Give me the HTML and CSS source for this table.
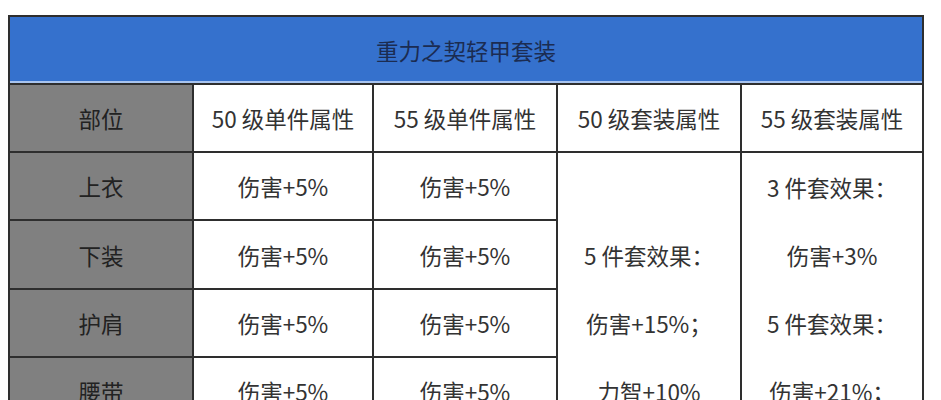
FILE: index.html
```html
<!DOCTYPE html>
<html lang="zh-CN">
<head>
<meta charset="utf-8">
<title>重力之契轻甲套装</title>
<link rel="stylesheet" href="styles.css">
</head>
<body>
<div class="page">
  <table class="set-table">
    <colgroup>
      <col class="c1"><col class="c2"><col class="c3"><col class="c4"><col class="c5">
    </colgroup>
    <tr class="title-row">
      <td colspan="5" class="title">重力之契轻甲套装</td>
    </tr>
    <tr class="row">
      <td class="part">部位</td>
      <td>50 级单件属性</td>
      <td>55 级单件属性</td>
      <td>50 级套装属性</td>
      <td>55 级套装属性</td>
    </tr>
    <tr class="row">
      <td class="part">上衣</td>
      <td>伤害+5%</td>
      <td>伤害+5%</td>
      <td rowspan="5" class="multi">
        <div class="line">5 件套效果：</div>
        <div class="line">伤害+15%；</div>
        <div class="line">力智+10%</div>
      </td>
      <td rowspan="5" class="multi">
        <div class="line">3 件套效果：</div>
        <div class="line">伤害+3%</div>
        <div class="line">5 件套效果：</div>
        <div class="line">伤害+21%；</div>
        <div class="line">力智+15%</div>
      </td>
    </tr>
    <tr class="row">
      <td class="part">下装</td>
      <td>伤害+5%</td>
      <td>伤害+5%</td>
    </tr>
    <tr class="row">
      <td class="part">护肩</td>
      <td>伤害+5%</td>
      <td>伤害+5%</td>
    </tr>
    <tr class="row">
      <td class="part">腰带</td>
      <td>伤害+5%</td>
      <td>伤害+5%</td>
    </tr>
    <tr class="row">
      <td class="part">鞋</td>
      <td>伤害+5%</td>
      <td>伤害+5%</td>
    </tr>
  </table>
</div>
</body>
</html>
```

FILE: styles.css
```css
html, body {
  margin: 0;
  padding: 0;
  background: #ffffff;
}

.page {
  padding: 15px 0 0 8px;
}

.set-table {
  border-collapse: collapse;
  table-layout: fixed;
  width: 914px;
  font-family: "Noto Sans CJK SC", "Microsoft YaHei", sans-serif;
  font-size: 22.5px;
  color: #333333;
}

.c1 { width: 184px; }
.c2 { width: 180px; }
.c3 { width: 184px; }
.c4 { width: 184px; }
.c5 { width: 182px; }

.set-table td {
  border: 2px solid #2e2e2e;
  text-align: center;
  vertical-align: middle;
  padding: 0;
  white-space: nowrap;
}

.title-row td {
  height: 66px;
}

.title {
  background: #3571cd;
  color: #1b2c52;
  box-shadow: inset 0 -2px 0 #a8c4ef;
}

.row td {
  height: 66px;
}

.part {
  background: #808080;
  color: #222222;
}

.multi .line {
  line-height: 68px;
}
```
